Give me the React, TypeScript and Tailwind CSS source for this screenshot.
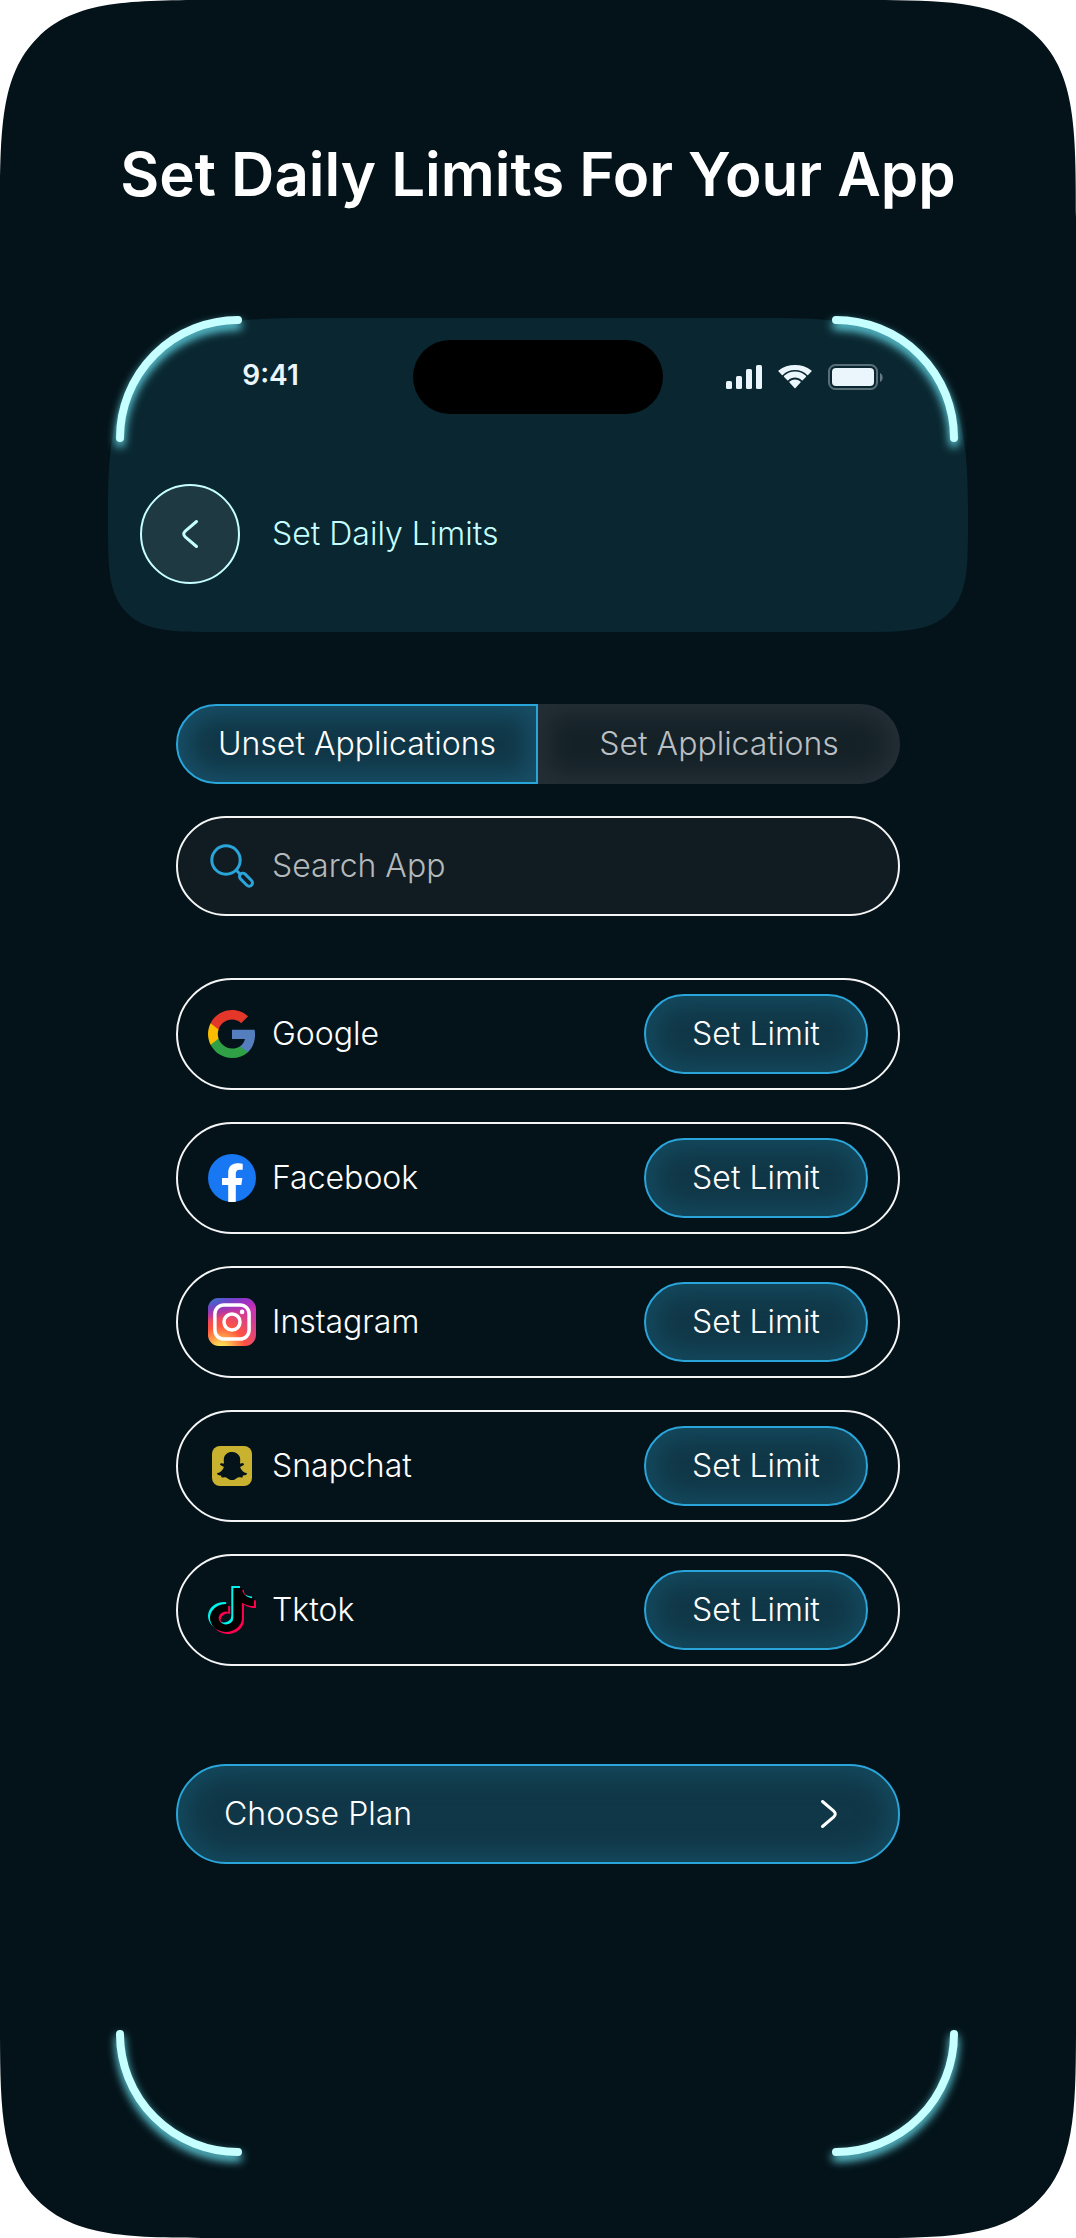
import { useState } from 'react'
import { FaSnapchatGhost, FaTiktok } from 'react-icons/fa'

const apps = [
  { name: 'Google', icon: <GoogleIcon /> },
  { name: 'Facebook', icon: <FacebookIcon /> },
  { name: 'Instagram', icon: <InstagramIcon /> },
  { name: 'Snapchat', icon: <SnapchatIcon /> },
  { name: 'Tktok', icon: <TiktokIcon /> },
]

function GoogleIcon() {
  return (
    <svg className="size-12" viewBox="1 1 22 22" aria-hidden="true">
      <path
        fill="#557ebf"
        d="M22.56 12.25c0-.78-.07-1.53-.2-2.25H12v4.26h5.92c-.26 1.37-1.04 2.53-2.21 3.31v2.77h3.57c2.08-1.92 3.28-4.74 3.28-8.09z"
      />
      <path
        fill="#30a046"
        d="M12 23c2.97 0 5.46-.98 7.28-2.66l-3.57-2.77c-.98.66-2.23 1.06-3.71 1.06-2.86 0-5.29-1.93-6.16-4.53H2.18v2.84C3.99 20.53 7.7 23 12 23z"
      />
      <path
        fill="#f9bc00"
        d="M5.84 14.09c-.22-.66-.35-1.36-.35-2.09s.13-1.43.35-2.09V7.07H2.18C1.43 8.55 1 10.22 1 12s.43 3.45 1.18 4.93l2.85-2.22.81-.62z"
      />
      <path
        fill="#e43629"
        d="M12 5.38c1.62 0 3.06.56 4.21 1.64l3.15-3.15C17.45 2.09 14.97 1 12 1 7.7 1 3.99 3.47 2.18 7.07l3.66 2.84c.87-2.6 3.3-4.53 6.16-4.53z"
      />
    </svg>
  )
}

function FacebookIcon() {
  return (
    <svg className="size-12" viewBox="0 0 48 48" aria-hidden="true">
      <circle cx="24" cy="24" r="24" fill="#1877f2" />
      <path
        fill="#fff"
        d="M20.2 47.7V31H14v-7h6.2v-5.3c0-6 3.6-9.4 9.1-9.4 2.6 0 5.4.5 5.4.5v5.9h-3c-3 0-3.9 1.9-3.9 3.8V24h6.6l-1.1 7h-5.5v16.7a24 24 0 0 1-7.6 0z"
      />
    </svg>
  )
}

function InstagramIcon() {
  return (
    <svg className="size-12" viewBox="0 0 48 48" aria-hidden="true">
      <defs>
        <radialGradient id="ig-warm" cx="13" cy="51.7" r="47.5" gradientUnits="userSpaceOnUse">
          <stop offset="0" stopColor="#fd5" />
          <stop offset="0.1" stopColor="#fd5" />
          <stop offset="0.5" stopColor="#ff543e" />
          <stop offset="1" stopColor="#c837ab" />
        </radialGradient>
        <radialGradient
          id="ig-cool"
          cx="0"
          cy="0"
          r="1"
          gradientUnits="userSpaceOnUse"
          gradientTransform="translate(-8 3.5) rotate(78.7) scale(21.2 87.5)"
        >
          <stop offset="0" stopColor="#3771c8" />
          <stop offset="0.128" stopColor="#3771c8" />
          <stop offset="1" stopColor="#60f" stopOpacity="0" />
        </radialGradient>
      </defs>
      <rect width="48" height="48" rx="11" fill="url(#ig-warm)" />
      <rect width="48" height="48" rx="11" fill="url(#ig-cool)" />
      <rect x="6.9" y="6.9" width="34.2" height="34.2" rx="9" fill="none" stroke="#fff" strokeWidth="3.5" />
      <circle cx="24" cy="24" r="8" fill="none" stroke="#fff" strokeWidth="3.5" />
      <circle cx="34.1" cy="13.9" r="2.3" fill="#fff" />
    </svg>
  )
}

function SnapchatIcon() {
  return (
    <span className="flex size-10 items-center justify-center rounded-lg bg-[#c9b230] text-[#04131a]">
      <FaSnapchatGhost size={30} aria-hidden="true" />
    </span>
  )
}

// cyan and red copies peek out from behind the black note
function TiktokIcon() {
  return (
    <svg className="size-12" viewBox="0 0 48 48" aria-hidden="true">
      <FaTiktok size={44} x="0" y="0" color="#00f2ea" preserveAspectRatio="none" />
      <FaTiktok size={44} x="4" y="4" color="#ff004f" preserveAspectRatio="none" />
      <FaTiktok size={44} x="2" y="2" color="#000" preserveAspectRatio="none" />
    </svg>
  )
}

function SearchIcon() {
  return (
    <svg className="size-11" viewBox="0 0 44 44" fill="none" stroke="#2aa5da" strokeWidth="3" aria-hidden="true">
      <circle cx="16" cy="16" r="14.2" />
      <path d="M26 26l4 4" />
      <rect x="28.2" y="32.4" width="15.6" height="6.6" rx="3.3" transform="rotate(45 36 35.7)" />
    </svg>
  )
}

function Chevron({ className }: { className: string }) {
  return (
    <svg
      className={className}
      viewBox="0 0 18 30"
      fill="none"
      stroke="currentColor"
      strokeWidth="3"
      strokeLinecap="round"
      aria-hidden="true"
    >
      <path d="M15.5 2.500L4.500 11.800Q1 15 4.500 18.200L15.500 27.500" />
    </svg>
  )
}

/** Glowing quarter ring that sits on a corner of the phone frame */
function CornerArc({ className, d }: { className: string; d: string }) {
  return (
    <svg
      className={`pointer-events-none absolute size-[126px] overflow-visible drop-shadow-[0_5px_5px_#70f0ff] ${className}`}
      viewBox="0 0 126 126"
      fill="none"
      stroke="#c6ffff"
      strokeWidth="8"
      strokeLinecap="round"
      aria-hidden="true"
    >
      <path d={d} />
    </svg>
  )
}

function StatusBar() {
  return (
    <div className="grid grid-cols-[1fr_250px_1fr] items-center">
      <span className="pr-3 pb-1 text-center text-[28px] leading-8 font-semibold text-[#ebf5fc]">9:41</span>
      <div className="h-[74px] rounded-full bg-black" />
      <div className="flex items-center justify-center gap-4 pl-2.5 text-[#ebf5fc]">
        <svg width="36" height="24" viewBox="0 0 36 24" fill="currentColor" aria-hidden="true">
          <rect y="16" width="6" height="8" rx="1.6" />
          <rect x="10" y="11" width="6" height="13" rx="1.6" />
          <rect x="20" y="4" width="6" height="20" rx="1.6" />
          <rect x="30" width="6" height="24" rx="1.6" />
        </svg>
        <svg width="34" height="24" viewBox="0 0 34 24" fill="currentColor" aria-hidden="true">
          <path d="M17 5c4.700 0 9 1.800 12.200 4.900.3.300.6.300.9 0l3.300-3.300a.8.800 0 0 0 0-1.100C24.200-1.800 9.800-1.800.6 5.500a.8.800 0 0 0 0 1.100l3.300 3.300c.3.300.6.300.9 0C8 6.800 12.300 5 17 5z" />
          <path d="M17 12.600c2.500 0 4.900.9 6.700 2.600.3.300.7.300 1 0l3.200-3.300a.8.800 0 0 0 0-1.100 16 16 0 0 0-21.800 0 .8.800 0 0 0 0 1.100l3.200 3.300c.3.300.7.300 1 0 1.800-1.700 4.200-2.600 6.700-2.600z" />
          <path d="M22.500 17.400c.3-.3.300-.8 0-1a8.700 8.700 0 0 0-11 0c-.3.200-.3.700 0 1l5 5.700c.3.300.7.300 1 0z" />
        </svg>
        <svg width="55" height="26" viewBox="0 0 55 26" aria-hidden="true">
          <rect x="1" y="1" width="48" height="24" rx="6.500" fill="none" stroke="currentColor" strokeOpacity=".35" strokeWidth="2" />
          <rect x="4" y="4" width="42" height="18" rx="4" fill="currentColor" />
          <path d="M52 9v9c3.500-1.500 3.500-7.500 0-9z" fill="currentColor" fillOpacity=".4" />
        </svg>
      </div>
    </div>
  )
}

export default function App() {
  const [tab, setTab] = useState<'unset' | 'set'>('unset')
  const [query, setQuery] = useState('')

  const activeTab = 'border-2 border-[#2aa5da] bg-[#103747] text-white shadow-[inset_0_0_24px_10px_#184f67]'
  const idleTab = 'bg-[#152228] text-[#b9bfc2] shadow-[inset_0_0_24px_10px_#262f36]'
  const visible = apps.filter((app) => app.name.toLowerCase().includes(query.toLowerCase()))

  return (
    <main className="rounded-[130px] bg-[#04131a] px-[108px] pb-[82px] pt-[136px] font-['Inter',sans-serif] text-[32px] leading-10 font-light text-white supports-[corner-shape:squircle]:rounded-[218px] [corner-shape:superellipse(1.870)]">
      <h1 className="text-center text-[60px] leading-[76px] font-semibold whitespace-nowrap">
        Set Daily Limits For Your App
      </h1>

      <section className="relative mt-[106px] pb-[292px]">
        <header className="h-[314px] rounded-t-[125px] rounded-b-[64px] bg-[#0a2731] px-8 pt-[22px] supports-[corner-shape:squircle]:rounded-t-[200px] supports-[corner-shape:squircle]:rounded-b-[110px] [corner-shape:superellipse(1.600)_superellipse(1.600)_superellipse(1.870)_superellipse(1.870)]">
          <StatusBar />
          <div className="mt-[70px] flex items-center gap-8 text-[#c6ffff]">
            <button
              type="button"
              aria-label="Back"
              className="flex size-[100px] items-center justify-center rounded-full border-2 border-[#c6ffff] bg-[#1f3943]"
            >
              <Chevron className="h-[30px] w-[18px]" />
            </button>
            <h2>Set Daily Limits</h2>
          </div>
        </header>

        <div className="px-[68px] pt-[72px]">
          <div role="tablist" className="grid h-20 grid-cols-2">
            <button
              type="button"
              role="tab"
              aria-selected={tab === 'unset'}
              onClick={() => setTab('unset')}
              className={`rounded-l-full ${tab === 'unset' ? activeTab : idleTab}`}
            >
              Unset Applications
            </button>
            <button
              type="button"
              role="tab"
              aria-selected={tab === 'set'}
              onClick={() => setTab('set')}
              className={`rounded-r-full ${tab === 'set' ? activeTab : idleTab}`}
            >
              Set Applications
            </button>
          </div>

          <label
            htmlFor="app-search"
            className="mt-8 flex h-[100px] items-center gap-4 rounded-full border-2 border-[#f5f5f5] bg-[#101c21] px-[30px]"
          >
            <span className="flex size-12 items-center justify-center">
              <SearchIcon />
            </span>
            <input
              id="app-search"
              type="text"
              aria-label="Search App"
              value={query}
              onChange={(e) => setQuery(e.target.value)}
              placeholder="Search App"
              className="min-w-0 flex-1 bg-transparent outline-none placeholder:text-[#b4b9bb]"
            />
          </label>

          <ul className="mt-[62px] flex flex-col gap-8">
            {visible.map((app) => (
              <li
                key={app.name}
                className="flex h-28 items-center gap-4 rounded-full border-2 border-[#f5f5f5] px-[30px]"
              >
                <span className="flex size-12 items-center justify-center">{app.icon}</span>
                <span className="flex-1">{app.name}</span>
                <button
                  type="button"
                  className="h-20 w-56 rounded-full border-2 border-[#2aa5da] bg-[#103747] shadow-[inset_0_0_24px_10px_#14495e]"
                >
                  Set Limit
                </button>
              </li>
            ))}
          </ul>

          <button
            type="button"
            className="mt-[98px] flex h-[100px] w-full items-center justify-between rounded-full border-2 border-[#2aa5da] bg-[#103747] pr-[60px] pl-[46px] shadow-[inset_0_0_24px_10px_#14495e]"
          >
            Choose Plan
            <Chevron className="h-[30px] w-[18px] rotate-180" />
          </button>
        </div>

        <CornerArc className="-top-0.5 left-2" d="M4 122A118 118 0 0 1 122 4" />
        <CornerArc className="-top-0.5 right-2.5" d="M4 4A118 118 0 0 1 122 122" />
        <CornerArc className="bottom-0 left-2" d="M4 4A118 118 0 0 0 122 122" />
        <CornerArc className="right-2.5 bottom-0" d="M122 4A118 118 0 0 1 4 122" />
      </section>
    </main>
  )
}
